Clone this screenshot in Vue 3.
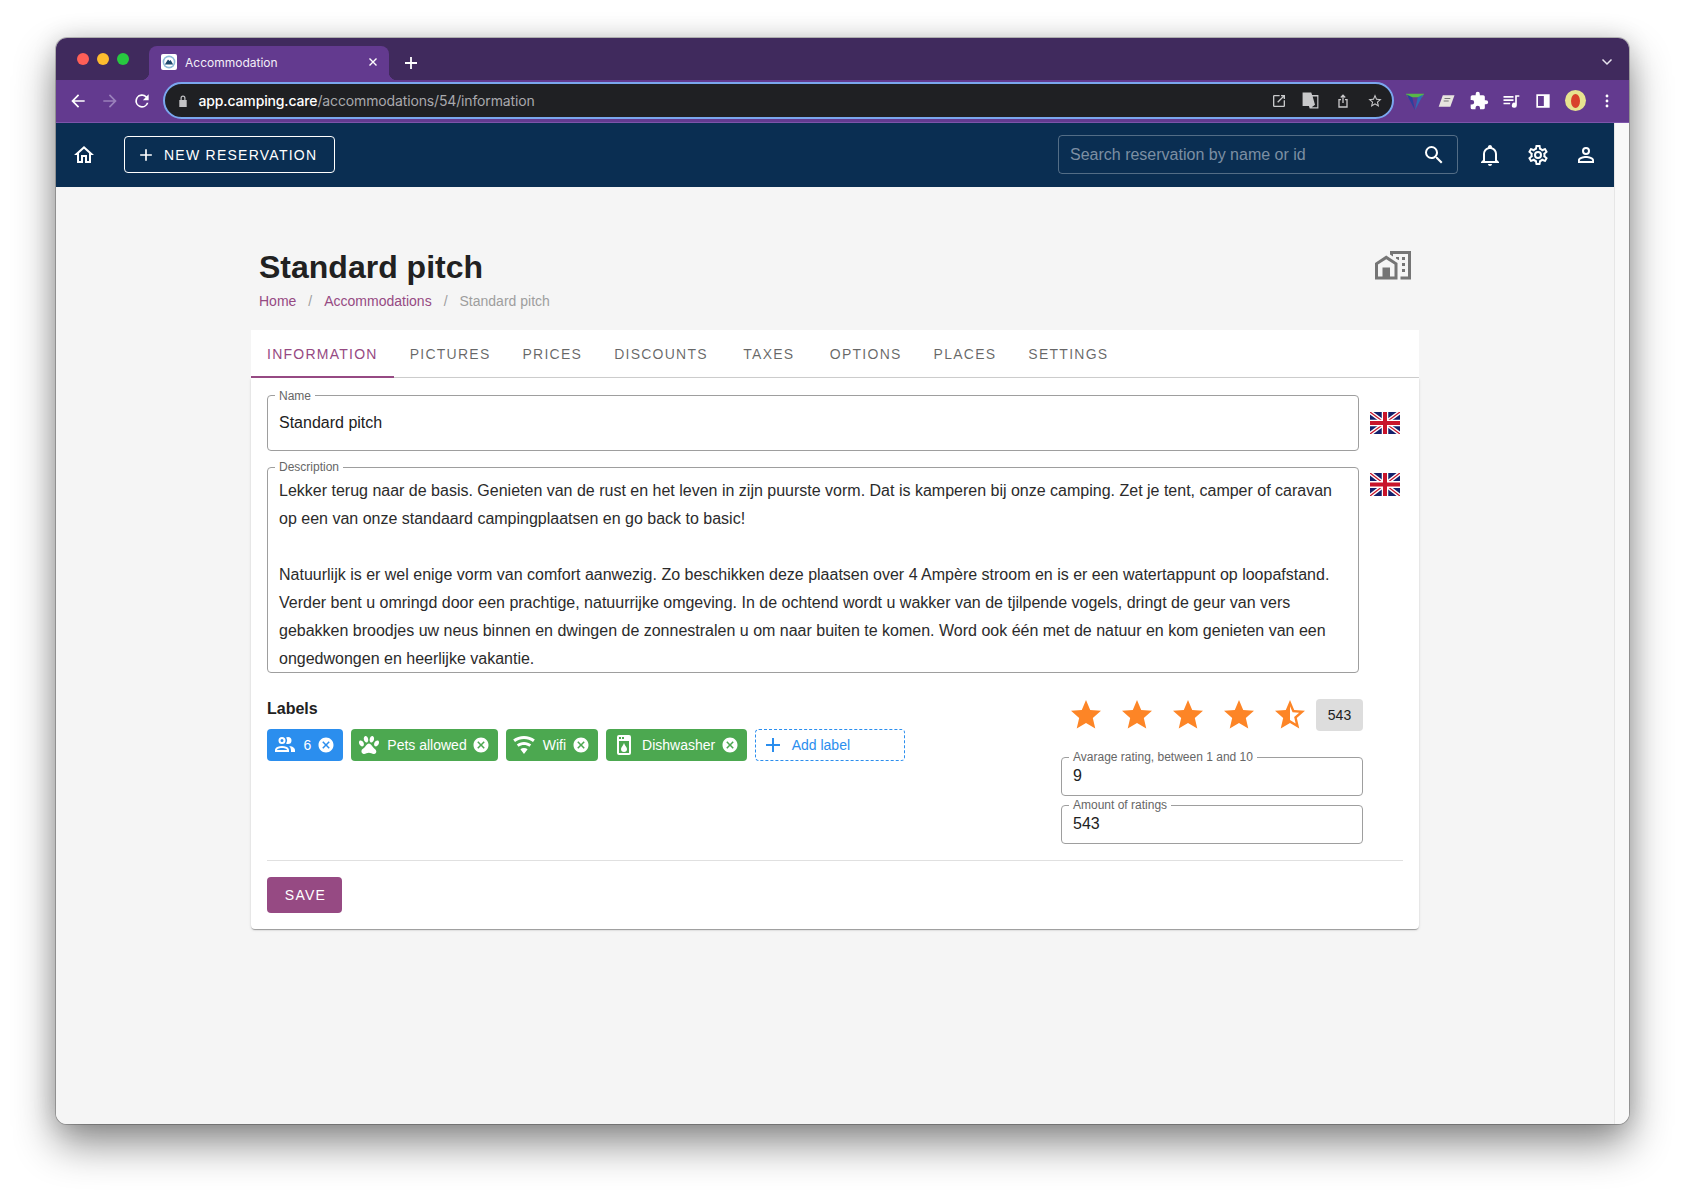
<script setup>
const icons = {
  home: 'M12 5.69L17 10.19V18H15V12H9V18H7V10.19L12 5.69M12 3L2 12H5V20H11V14H13V20H19V12H22',
  plus: 'M19,13H13V19H11V13H5V11H11V5H13V11H19V13Z',
  magnify: 'M9.5,3A6.5,6.5 0 0,1 16,9.5C16,11.11 15.41,12.59 14.44,13.73L14.71,14H15.5L20.5,19L19,20.5L14,15.5V14.71L13.73,14.44C12.59,15.41 11.11,16 9.5,16A6.5,6.5 0 0,1 3,9.5A6.5,6.5 0 0,1 9.5,3M9.5,5C7,5 5,7 5,9.5C5,12 7,14 9.5,14C12,14 14,12 14,9.5C14,7 12,5 9.5,5Z',
  bell: 'M10 21H14C14 22.1 13.1 23 12 23S10 22.1 10 21M21 19V20H3V19L5 17V11C5 7.9 7 5.2 10 4.3V4C10 2.9 10.9 2 12 2S14 2.9 14 4V4.3C17 5.2 19 7.9 19 11V17L21 19M17 11C17 8.2 14.8 6 12 6S7 8.2 7 11V18H17V11Z',
  cog: 'M12,8A4,4 0 0,1 16,12A4,4 0 0,1 12,16A4,4 0 0,1 8,12A4,4 0 0,1 12,8M12,10A2,2 0 0,0 10,12A2,2 0 0,0 12,14A2,2 0 0,0 14,12A2,2 0 0,0 12,10M10,22C9.75,22 9.54,21.82 9.5,21.58L9.13,18.93C8.5,18.68 7.96,18.34 7.44,17.94L4.95,18.95C4.73,19.03 4.46,18.95 4.34,18.73L2.34,15.27C2.21,15.05 2.27,14.78 2.46,14.63L4.57,12.97L4.5,12L4.57,11L2.46,9.37C2.27,9.22 2.21,8.95 2.34,8.73L4.34,5.27C4.46,5.05 4.73,4.96 4.95,5.05L7.44,6.05C7.96,5.66 8.5,5.32 9.13,5.07L9.5,2.42C9.54,2.18 9.75,2 10,2H14C14.25,2 14.46,2.18 14.5,2.42L14.87,5.07C15.5,5.32 16.04,5.66 16.56,6.05L19.05,5.05C19.27,4.96 19.54,5.05 19.66,5.27L21.66,8.73C21.79,8.95 21.73,9.22 21.54,9.37L19.43,11L19.5,12L19.43,13L21.54,14.63C21.73,14.78 21.79,15.05 21.66,15.27L19.66,18.73C19.54,18.95 19.27,19.04 19.05,18.95L16.56,17.95C16.04,18.34 15.5,18.68 14.87,18.93L14.5,21.58C14.46,21.82 14.25,22 14,22H10M11.25,4L10.88,6.61C9.68,6.86 8.62,7.5 7.85,8.39L5.44,7.35L4.69,8.65L6.8,10.2C6.4,11.37 6.4,12.64 6.8,13.8L4.68,15.36L5.43,16.66L7.86,15.62C8.63,16.5 9.68,17.14 10.87,17.38L11.24,20H12.76L13.13,17.39C14.32,17.14 15.37,16.5 16.14,15.62L18.57,16.66L19.32,15.36L17.2,13.81C17.6,12.64 17.6,11.37 17.2,10.2L19.31,8.65L18.56,7.35L16.15,8.39C15.38,7.5 14.32,6.86 13.12,6.62L12.75,4H11.25Z',
  account: 'M12,4A4,4 0 0,1 16,8A4,4 0 0,1 12,12A4,4 0 0,1 8,8A4,4 0 0,1 12,4M12,6A2,2 0 0,0 10,8A2,2 0 0,0 12,10A2,2 0 0,0 14,8A2,2 0 0,0 12,6M12,13C14.67,13 20,14.33 20,17V20H4V17C4,14.33 9.33,13 12,13M12,14.9C9.03,14.9 5.9,16.36 5.9,17V18.1H18.1V17C18.1,16.36 14.97,14.9 12,14.9Z',
  city: 'M10,2V4.26L12,5.59V4H22V19H17V21H24V2H10M7.5,5L0,10V21H15V10L7.5,5M14,6V6.93L15.61,8H16V6H14M18,6V8H20V6H18M7.5,7.5L13,11V19H10V13H5V19H2V11L7.5,7.5M18,10V12H20V10H18M18,14V16H20V14H18Z',
  close: 'M12,2C17.53,2 22,6.47 22,12C22,17.53 17.53,22 12,22C6.47,22 2,17.53 2,12C2,6.47 6.47,2 12,2M15.59,7L12,10.59L8.41,7L7,8.41L10.59,12L7,15.59L8.41,17L12,13.41L15.59,17L17,15.59L13.41,12L17,8.41L15.59,7Z',
  people: 'M13.07 10.41A5 5 0 0 0 13.07 4.59A3.39 3.39 0 0 1 15 4A3.5 3.5 0 0 1 15 11A3.39 3.39 0 0 1 13.07 10.41M5.5 7.5A3.5 3.5 0 1 1 9 11A3.5 3.5 0 0 1 5.5 7.5M7.5 7.5A1.5 1.5 0 1 0 9 6A1.5 1.5 0 0 0 7.5 7.5M16 17V19H2V17S2 13 9 13 16 17 16 17M14 17C13.86 16.22 12.67 15 9 15S4.07 16.31 4 17M15.95 13A5.32 5.32 0 0 1 18 17V19H22V17S22 13.37 15.94 13Z',
  paw: 'M8.35,3C9.53,2.83 10.78,4.12 11.14,5.9C11.5,7.67 10.85,9.25 9.67,9.43C8.5,9.61 7.24,8.32 6.87,6.54C6.5,4.77 7.17,3.19 8.35,3M15.5,3C16.69,3.19 17.35,4.77 17,6.54C16.62,8.32 15.37,9.61 14.19,9.43C13,9.25 12.35,7.67 12.72,5.9C13.08,4.12 14.33,2.83 15.5,3M3,7.6C4.14,7.11 5.69,8 6.5,9.55C7.26,11.13 7,12.79 5.87,13.28C4.74,13.77 3.2,12.89 2.41,11.32C1.62,9.75 1.9,8.08 3,7.6M21,7.6C22.1,8.08 22.38,9.75 21.59,11.32C20.8,12.89 19.26,13.77 18.13,13.28C17,12.79 16.74,11.13 17.5,9.55C18.31,8 19.86,7.11 21,7.6M19.33,18.38C19.37,19.32 18.65,20.36 17.79,20.75C16,21.57 13.88,19.87 11.89,19.87C9.9,19.87 7.76,21.64 6,20.75C5,20.26 4.31,18.96 4.44,17.88C4.62,16.39 6.41,15.59 7.47,14.5C8.88,13.09 9.88,10.44 11.89,10.44C13.89,10.44 14.95,13.05 16.3,14.5C17.41,15.72 19.26,16.75 19.33,18.38Z',
  wifi: 'M12,21L15.6,16.2C14.6,15.45 13.35,15 12,15C10.65,15 9.4,15.45 8.4,16.2L12,21M12,3C7.95,3 4.21,4.34 1.2,6.6L3,9C5.5,7.12 8.62,6 12,6C15.38,6 18.5,7.12 21,9L22.8,6.6C19.79,4.34 16.05,3 12,3M12,9C9.3,9 6.81,9.89 4.8,11.4L6.6,13.8C8.1,12.67 9.97,12 12,12C14.03,12 15.9,12.67 17.4,13.8L19.2,11.4C17.19,9.89 14.7,9 12,9Z',
  dish: 'M7,2H17A2,2 0 0,1 19,4V20A2,2 0 0,1 17,22H7A2,2 0 0,1 5,20V4A2,2 0 0,1 7,2M7,4V6H9V4H7M10,4V6H12V4H10M7,8V20H17V8H7M12,10C13,13 15,14 15,16A3,3 0 0,1 12,19A3,3 0 0,1 9,16C9,14 11,13 12,10Z',
  star: 'M12,17.27L18.18,21L16.54,13.97L22,9.24L14.81,8.62L12,2L9.19,8.62L2,9.24L7.45,13.97L5.82,21L12,17.27Z',
  half: 'M12,15.4V6.1L13.71,10.13L18.09,10.5L14.77,13.39L15.76,17.67M22,9.24L14.81,8.63L12,2L9.19,8.63L2,9.24L7.45,13.97L5.82,21L12,17.27L18.18,21L16.54,13.97L22,9.24Z'
}
const urlIcons = [
  'M5 3h8v2H5v14h14v-8h2v8a2 2 0 0 1-2 2H5a2 2 0 0 1-2-2V5a2 2 0 0 1 2-2zM15 3h6v6h-2V6.4l-8.3 8.3-1.4-1.4L17.6 5H15z',
  'M2 2h11l1 3h8v17H11l-1-3H2zM14.7 7l3 10.500-4.200 3H20.500V7z',
  'M12 2l4 4-1.4 1.4L13 5.8V15h-2V5.8L9.4 7.4 8 6zM5 9h4v2H7v9h10v-9h-2V9h4v13H5z',
  'M12 15.4l-3.8 2.3 1-4.3-3.3-2.9 4.4-.4L12 6.1l1.7 4 4.4.4-3.3 2.9 1 4.3M22 9.2l-7.2-.6L12 2 9.2 8.6 2 9.2l5.5 4.8L5.8 21l6.2-3.7 6.2 3.7-1.6-7z'
]
const tabs = ['Information', 'Pictures', 'Prices', 'Discounts', 'Taxes', 'Options', 'Places', 'Settings']
const labels = [
  { text: '6', icon: 'people', tone: 'blue' },
  { text: 'Pets allowed', icon: 'paw', tone: 'green' },
  { text: 'Wifi', icon: 'wifi', tone: 'green' },
  { text: 'Dishwasher', icon: 'dish', tone: 'green' }
]
const stars = ['star', 'star', 'star', 'star', 'half']
const paragraphs = [
  'Lekker terug naar de basis. Genieten van de rust en het leven in zijn puurste vorm. Dat is kamperen bij onze camping. Zet je tent, camper of caravan op een van onze standaard campingplaatsen en go back to basic!',
  'Natuurlijk is er wel enige vorm van comfort aanwezig. Zo beschikken deze plaatsen over 4 Ampère stroom en is er een watertappunt op loopafstand. Verder bent u omringd door een prachtige, natuurrijke omgeving. In de ochtend wordt u wakker van de tjilpende vogels, dringt de geur van vers gebakken broodjes uw neus binnen en dwingen de zonnestralen u om naar buiten te komen. Word ook één met de natuur en kom genieten van een ongedwongen en heerlijke vakantie.'
]
</script>

<template>
  <div class="page">
    <div class="window">
      <div class="strip">
        <div class="lights"><i class="red"></i><i class="amber"></i><i class="lime"></i></div>
        <div class="tab">
          <svg class="favicon" viewBox="0 0 16 16">
            <rect width="16" height="16" rx="2" fill="#fff" />
            <circle cx="8" cy="8" r="6.4" fill="#8dbbd8" />
            <circle cx="8" cy="8" r="4.8" fill="#fff" />
            <path d="M3.8 10.500 7 5.400l1.600 1.600 1-.9 2.600 4.400z" fill="#1c4a6e" />
          </svg>
          <span class="tab-title">Accommodation</span>
          <svg class="tab-x" viewBox="0 0 10 10"><path d="M1.5 1.5l7 7M8.5 1.5l-7 7" stroke="#fff" stroke-width="1.4" /></svg>
        </div>
        <svg class="newtab" viewBox="0 0 14 14"><path d="M7 1v12M1 7h12" stroke="#fff" stroke-width="1.8" /></svg>
        <svg class="chev" viewBox="0 0 12 8"><path d="M1.5 1.5 6 6l4.5-4.5" fill="none" stroke="#e8e4ee" stroke-width="1.5" /></svg>
      </div>

      <div class="toolbar">
        <span class="tb"><svg viewBox="0 0 24 24"><path d="M20 11H7.8l5.6-5.6L12 4l-8 8 8 8 1.4-1.4L7.8 13H20z" fill="#fff" /></svg></span>
        <span class="tb"><svg viewBox="0 0 24 24"><path d="M4 11h12.2l-5.6-5.6L12 4l8 8-8 8-1.4-1.4 5.6-5.6H4z" fill="#9a80bb" /></svg></span>
        <span class="tb"><svg viewBox="0 0 24 24"><path d="M17.65 6.35A8 8 0 1 0 19.73 14h-2.08A6 6 0 1 1 12 6c1.66 0 3.14.69 4.22 1.78L13 11h7V4z" fill="#fff" /></svg></span>
        <div class="url">
          <svg class="lock" viewBox="0 0 12 14"><path d="M3.5 6V4a2.5 2.5 0 0 1 5 0v2h1.2v7H2.300V6zM4.700 6h2.600V4a1.300 1.300 0 0 0-2.600 0z" fill="#c4c4c6" /></svg>
          <span class="addr"><b>app.camping.care</b>/accommodations/54/information</span>
          <span v-for="(d, i) in urlIcons" :key="i" class="ui" :class="{ wide: i === 1 }"><svg viewBox="0 0 24 24"><path :d="d" fill="#c8c8ca" fill-rule="evenodd" /></svg></span>
        </div>
        <div class="exts">
          <span class="tb"><svg class="ext-big" viewBox="0 0 24 24"><path d="M2 4h20l-2.500 4h-15z" fill="#57b947" /><path d="M3 5l9 17-3-14z" fill="#2c3f9e" /><path d="M21 5l-9 17 3-14z" fill="#2e6bb7" /></svg></span>
          <span class="tb"><svg viewBox="0 0 24 24"><path d="M7 5h14l-5 14H2z" fill="#e7e4df" /><path d="M9 9h7M8 12h6" stroke="#777" stroke-width="1.400" /></svg></span>
          <span class="tb"><svg viewBox="0 0 24 24"><path d="M20.500 11H19V7a2 2 0 0 0-2-2h-4V3.500a2.500 2.500 0 0 0-5 0V5H4a2 2 0 0 0-2 2v3.800h1.500a2.700 2.700 0 0 1 0 5.400H2V20a2 2 0 0 0 2 2h3.800v-1.500a2.700 2.700 0 0 1 5.400 0V22H17a2 2 0 0 0 2-2v-4h1.500a2.500 2.500 0 0 0 0-5z" fill="#fff" /></svg></span>
          <span class="tb"><svg viewBox="0 0 24 24"><path d="M3 6h12v2H3zM3 10h12v2H3zM3 14h8v2H3zM17 5h5v2h-3v10a3 3 0 1 1-2-2.800z" fill="#fff" /></svg></span>
          <span class="tb"><svg viewBox="0 0 24 24"><path d="M4 4h16v16H4zM6 6v12h7V6z" fill="#fff" /></svg></span>
          <span class="tb"><span class="avatar"><i></i></span></span>
          <span class="tb"><svg viewBox="0 0 24 24"><circle cx="12" cy="6" r="1.700" fill="#fff" /><circle cx="12" cy="12" r="1.700" fill="#fff" /><circle cx="12" cy="18" r="1.700" fill="#fff" /></svg></span>
        </div>
      </div>

      <div class="body">
        <div class="app">
          <header class="head">
            <svg class="i24 wh" viewBox="0 0 24 24"><path :d="icons.home" /></svg>
            <button class="newres">
              <svg class="i20 wh" viewBox="0 0 24 24"><path :d="icons.plus" /></svg>
              <span>NEW RESERVATION</span>
            </button>
            <div class="search">
              <span>Search reservation by name or id</span>
              <svg class="i24 wh" viewBox="0 0 24 24"><path :d="icons.magnify" /></svg>
            </div>
            <span class="hb first"><svg class="i24 wh" viewBox="0 0 24 24"><path :d="icons.bell" /></svg></span>
            <span class="hb"><svg class="i24 wh" viewBox="0 0 24 24"><path :d="icons.cog" /></svg></span>
            <span class="hb"><svg class="i24 wh" viewBox="0 0 24 24"><path :d="icons.account" /></svg></span>
          </header>

          <main class="main">
            <div class="wrap">
              <div class="title-row">
                <div>
                  <h1>Standard pitch</h1>
                  <nav class="crumbs">
                    <a>Home</a><span class="sep">/</span><a>Accommodations</a><span class="sep">/</span><span class="cur">Standard pitch</span>
                  </nav>
                </div>
                <svg class="city" viewBox="0 0 24 24"><path :d="icons.city" /></svg>
              </div>

              <div class="tabs">
                <div v-for="(t, i) in tabs" :key="t" class="t" :class="{ on: i === 0 }">{{ t }}</div>
              </div>

              <section class="card">
                <div class="row">
                  <fieldset class="f">
                    <legend>Name</legend>
                    <div class="v name-v">Standard pitch</div>
                  </fieldset>
                  <svg class="flag flag1" viewBox="0 0 60 44" preserveAspectRatio="none">
                    <rect width="60" height="44" fill="#14206b" />
                    <path d="M0 0l60 44M60 0L0 44" stroke="#fff" stroke-width="8" />
                    <path d="M0 0l60 44M60 0L0 44" stroke="#c8142a" stroke-width="2.500" />
                    <path d="M30 0v44M0 22h60" stroke="#fff" stroke-width="13" />
                    <path d="M30 0v44M0 22h60" stroke="#c8142a" stroke-width="8" />
                  </svg>
                </div>
                <div class="row r2">
                  <fieldset class="f">
                    <legend>Description</legend>
                    <div class="desc">
                      <p v-for="(p, i) in paragraphs" :key="i">{{ p }}</p>
                    </div>
                  </fieldset>
                  <svg class="flag flag2" viewBox="0 0 60 44" preserveAspectRatio="none">
                    <rect width="60" height="44" fill="#14206b" />
                    <path d="M0 0l60 44M60 0L0 44" stroke="#fff" stroke-width="8" />
                    <path d="M0 0l60 44M60 0L0 44" stroke="#c8142a" stroke-width="2.500" />
                    <path d="M30 0v44M0 22h60" stroke="#fff" stroke-width="13" />
                    <path d="M30 0v44M0 22h60" stroke="#c8142a" stroke-width="8" />
                  </svg>
                </div>

                <div class="meta">
                  <div class="lab">
                    <h3>Labels</h3>
                    <div class="chips">
                      <span v-for="l in labels" :key="l.text" class="chip" :class="l.tone">
                        <svg class="i24 wh" viewBox="0 0 24 24"><path :d="icons[l.icon]" fill-rule="evenodd" /></svg>
                        <span class="chip-t">{{ l.text }}</span>
                        <svg class="i18 wh" viewBox="0 0 24 24"><path :d="icons.close" /></svg>
                      </span>
                      <span class="add">
                        <svg class="i24 bl" viewBox="0 0 24 24"><path :d="icons.plus" /></svg>
                        <span>Add label</span>
                      </span>
                    </div>
                  </div>
                  <div class="rate">
                    <div class="stars">
                      <span v-for="(s, i) in stars" :key="i" class="st"><svg viewBox="0 0 24 24"><path :d="icons[s]" /></svg></span>
                      <span class="badge">543</span>
                    </div>
                    <fieldset class="f small first-s">
                      <legend>Avarage rating, between 1 and 10</legend>
                      <div class="v">9</div>
                    </fieldset>
                    <fieldset class="f small second-s">
                      <legend>Amount of ratings</legend>
                      <div class="v">543</div>
                    </fieldset>
                  </div>
                </div>

                <hr />
                <button class="save">SAVE</button>
              </section>
            </div>
          </main>
        </div>
        <div class="rail"></div>
      </div>
    </div>
  </div>
</template>

<style>
html, body { margin: 0; background: #fff; }
</style>

<style scoped>
* { box-sizing: border-box; }
.page {
  position: relative; width: 1685px; height: 1198px; padding: 38px 56px 74px; overflow: hidden; background: #fff;
  font-family: "Liberation Sans", Arial, sans-serif; color: #212121;
}
.page::before {
  content: ""; position: absolute; left: 56px; top: 38px; width: 1573px; height: 1086px; border-radius: 11px;
  box-shadow: 0 20px 42px rgba(0,0,0,.45), 0 0 24px rgba(0,0,0,.14);
}
.window {
  position: relative; height: 1086px; display: flex; flex-direction: column; border-radius: 11px; overflow: hidden;
  box-shadow: 0 0 0 1px rgba(0,0,0,.22);
}

.strip { height: 42px; background: #402a5d; display: flex; align-items: flex-end; flex: none; }
.lights { display: flex; gap: 8px; align-self: flex-start; margin: 15px 0 0 21px; width: 72px; }
.lights i { width: 12px; height: 12px; border-radius: 50%; }
.red { background: #ff5f57; } .amber { background: #febc2e; } .lime { background: #28c840; }
.tab {
  position: relative; width: 240px; height: 34px; background: #633a8f; border-radius: 8px 8px 0 0;
  display: flex; align-items: center; padding: 0 11px 2px 12px; color: #fff;
}
.tab::before, .tab::after { content: ""; position: absolute; bottom: 0; width: 8px; height: 8px; }
.tab::before { left: -8px; background: radial-gradient(circle at 0 0, transparent 8px, #633a8f 8.5px); }
.tab::after { right: -8px; background: radial-gradient(circle at 100% 0, transparent 8px, #633a8f 8.5px); }
.favicon { width: 16px; height: 16px; flex: none; }
.tab-title { margin-left: 8px; font: 12px Inter, sans-serif; flex: 1; color: #f3eff8; }
.tab-x { width: 10px; height: 10px; }
.newtab { width: 14px; height: 14px; margin: 0 0 10.500px 15px; }
.chev { width: 12px; height: 8px; margin: 0 16px 14.500px auto; }

.toolbar {
  height: 42.5px; background: #633a8f; display: flex; align-items: center; padding: 0 6px 0 5.5px; flex: none;
  border-bottom: 1px solid #7d54aa;
}
.tb { width: 32px; height: 32px; display: flex; align-items: center; justify-content: center; flex: none; }
.tb svg { width: 20px; height: 20px; }
.tb svg.ext-big { width: 22px; height: 22px; }
.url {
  flex: 1; margin-left: 5px; height: 37px; border-radius: 19px; background: #1f2023; border: 2px solid #7aa6ee;
  display: flex; align-items: center; padding: 0 1.5px 0 12px;
}
.lock { width: 12px; height: 14px; flex: none; }
.addr { flex: 1; margin-left: 10px; font: 14px Inter, sans-serif; color: #a9a9ad; letter-spacing: -.14px; }
.addr b { font-weight: 500; color: #fff; }
.ui { width: 32px; height: 24px; display: flex; align-items: center; justify-content: center; }
.ui svg { width: 16px; height: 16px; }
.ui.wide svg { width: 19px; height: 19px; }
.exts { display: flex; margin-left: 5px; }
.avatar { width: 21px; height: 21px; border-radius: 50%; background: #e7e38f; display: flex; align-items: center; justify-content: center; }
.avatar i { width: 9px; height: 14px; border-radius: 50%; background: #d8412b; }

.body { flex: 1; display: flex; min-height: 0; }
.app { width: 1558px; background: #f5f5f5; display: flex; flex-direction: column; }
.rail { flex: 1; background: #f8f8f8; border-left: 1px solid #e6e6e6; }

.head { height: 64px; background: #0a2e52; display: flex; align-items: center; padding: 0 4.5px 0 16px; flex: none; }
.i24 { width: 24px; height: 24px; flex: none; }
.i20 { width: 20px; height: 20px; flex: none; }
.i18 { width: 18px; height: 18px; flex: none; }
.wh path { fill: #fff; }
.bl path { fill: #2b8eee; }
.newres {
  margin-left: 28px; height: 36.500px; width: 210.500px; background: transparent; border: 1px solid #fff; border-radius: 4px;
  display: flex; align-items: center; padding: 0 0 0 11px; color: #fff; font: 14px "Liberation Sans", sans-serif; letter-spacing: 1.25px;
}
.newres span { margin-left: 8px; }
.search {
  margin-left: auto; width: 400px; height: 39px; border: 1px solid rgba(255,255,255,.3); border-radius: 4px;
  display: flex; align-items: center; justify-content: space-between; padding: 0 11px 0 11px; color: #7c8fa3; font-size: 16px;
}
.hb { width: 48px; height: 48px; display: flex; align-items: center; justify-content: center; }
.hb.first { margin-left: 7.500px; }

.main { flex: 1; padding: 0 195px; }
.title-row { display: flex; justify-content: space-between; padding: 0 8px; }
h1 { margin: 60px 0 0; font-size: 32px; line-height: 40px; font-weight: 700; color: #212121; }
.crumbs { margin-top: 4px; height: 20px; font-size: 14px; line-height: 20px; color: #9e9e9e; }
.crumbs a { color: #964a83; }
.sep { padding: 0 12px; }
.city { width: 36px; height: 36px; margin-top: 61.500px; }
.city path { fill: #757575; }

.tabs { margin-top: 19px; height: 48px; background: #fff; display: flex; }
.t {
  min-width: 90px; padding: 3px 16px 0; display: flex; align-items: center; justify-content: center; text-transform: uppercase;
  font-size: 14px; letter-spacing: 1.25px; color: rgba(0,0,0,.6); border-bottom: 2px solid transparent;
}
.t.on { color: #964a83; border-bottom-color: #964a83; }

.card {
  background: #fff; border-radius: 0 0 4px 4px; padding: 11px 16px 16px;
  box-shadow: 0 2px 1px -1px rgba(0,0,0,.2), 0 1px 1px rgba(0,0,0,.14), 0 1px 3px rgba(0,0,0,.12), 0 -1px 0 #d0d0d0;
}
.row { display: flex; align-items: flex-start; gap: 11px; padding-right: 3px; }
.r2 { margin-top: 9px; }
.f { flex: 1; min-width: 0; margin: 0; padding: 0 11px; border: 1px solid #9e9e9e; border-radius: 4px; }
legend { margin-left: -4px; padding: 0 4px; font-size: 12px; line-height: 14px; color: #666; }
.v { font-size: 16px; line-height: 24px; color: #212121; }
.name-v { padding: 8px 0 15.500px; }
.flag { width: 30px; flex: none; }
.flag1 { height: 22px; margin-top: 23px; }
.flag2 { height: 23px; margin-top: 13px; }
.desc { padding-top: 3px; font-size: 16px; line-height: 28px; color: #2b2b2b; }
.desc p { margin: 0 0 28px; }
.desc p:last-child { margin: 0 0 -1px; }

.meta { display: flex; justify-content: space-between; margin-top: 23px; padding-right: 40px; }
h3 { margin: 1px 0 0; font-size: 16px; line-height: 24px; font-weight: 700; }
.chips { display: flex; gap: 8px; margin-top: 7.500px; }
.chip {
  height: 32px; border-radius: 4px; display: flex; align-items: center; padding: 0 8px 0 6px; color: #fff; font-size: 14px;
}
.chip-t { margin: 0 5.500px 0 6.500px; }
.blue { background: #2b8eee; }
.green { background: #4ca850; }
.add {
  width: 150px; height: 32px; border: 1px dashed #2b8eee; border-radius: 4px; display: flex; align-items: center;
  padding-left: 5px; color: #2b8eee; font-size: 14px; gap: 7px;
}
.rate { width: 302px; padding-top: 3px; }
.stars { display: flex; align-items: center; height: 32px; margin-left: -.5px; }
.st { width: 51px; height: 36px; display: flex; align-items: center; justify-content: center; }
.st svg { width: 36px; height: 36px; }
.st path { fill: #fd8526; }
.badge {
  width: 47px; height: 32px; background: #ddd; border-radius: 4px; display: flex; align-items: center; justify-content: center;
  font-size: 14px; color: #212121; margin-left: .5px;
}
.small { display: block; }
.first-s .v { padding-bottom: 7px; }
.second-s .v { padding-bottom: 7px; }
.first-s { margin-top: 19px; }
.second-s { margin-top: 2px; }
hr { margin: 16px 0 0; border: 0; border-top: 1px solid #e0e0e0; }
.save {
  display: block; margin-top: 16px; width: 75px; height: 36px; background: #964a83; border: 0; border-radius: 4px; color: #fff;
  font: 14px "Liberation Sans", sans-serif; letter-spacing: 1.25px; padding: 0 0 0 2px;
}
</style>
